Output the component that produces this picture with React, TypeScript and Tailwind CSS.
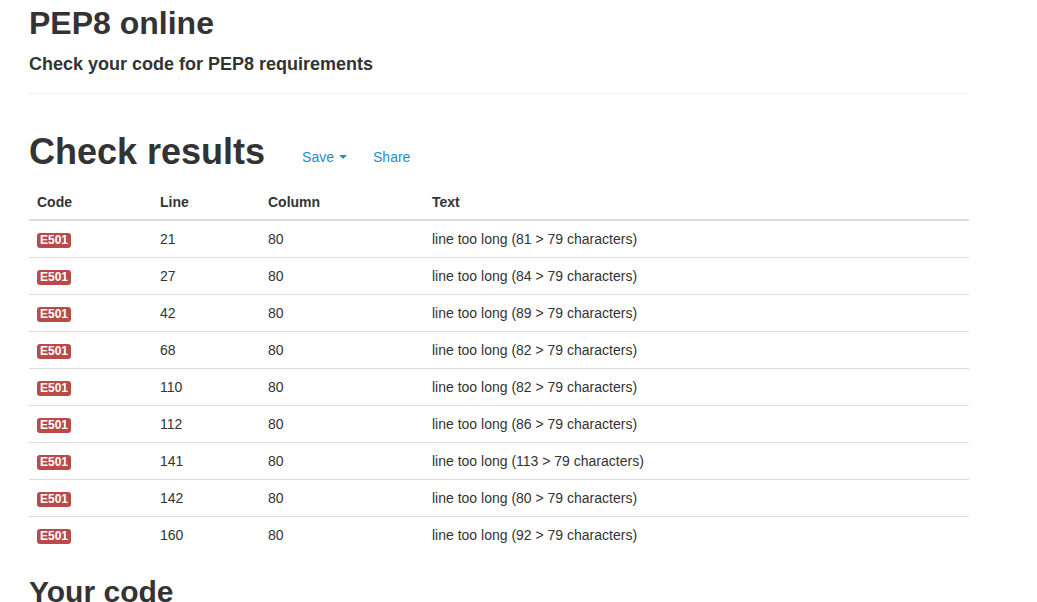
import React from 'react';

const rows = [
  { line: 21, text: 'line too long (81 > 79 characters)' },
  { line: 27, text: 'line too long (84 > 79 characters)' },
  { line: 42, text: 'line too long (89 > 79 characters)' },
  { line: 68, text: 'line too long (82 > 79 characters)' },
  { line: 110, text: 'line too long (82 > 79 characters)' },
  { line: 112, text: 'line too long (86 > 79 characters)' },
  { line: 141, text: 'line too long (113 > 79 characters)' },
  { line: 142, text: 'line too long (80 > 79 characters)' },
  { line: 160, text: 'line too long (92 > 79 characters)' },
];

function App() {
  return (
    <div className="min-h-screen bg-white text-[#333] text-[14px] leading-[20px] font-['Liberation_Sans',Arial,sans-serif] overflow-hidden h-[602px]">
      <div className="ml-[29px] w-[940px]">
        {/* Page header */}
        <div className="pt-[3px] pb-[19px] border-b border-[#eee]">
          <h1 className="text-[32px] leading-[40px] font-bold">PEP8 online</h1>
          <h4 className="mt-[11px] text-[18px] leading-[20px] font-bold">Check your code for PEP8 requirements</h4>
        </div>

        {/* Results heading */}
        <div className="mt-[36px] flex items-center">
          <h1 className="text-[36px] leading-[44px] font-bold">Check results</h1>
          <a className="ml-[37px] mt-[10px] text-[#1f8dd6] text-[14px] flex items-center cursor-pointer">
            Save
            <span className="ml-[5px] inline-block w-0 h-0 border-l-[4px] border-r-[4px] border-t-[4px] border-l-transparent border-r-transparent border-t-[#1f8dd6]"></span>
          </a>
          <a className="ml-[26px] mt-[10px] text-[#1f8dd6] text-[14px] cursor-pointer">Share</a>
        </div>

        <table className="mt-[9px] w-full border-collapse text-left">
          <thead>
            <tr className="border-b-2 border-[#ddd]">
              <th className="w-[123px] px-[8px] pt-[9px] pb-[7px] font-bold">Code</th>
              <th className="w-[108px] px-[8px] pt-[9px] pb-[7px] font-bold">Line</th>
              <th className="w-[164px] px-[8px] pt-[9px] pb-[7px] font-bold">Column</th>
              <th className="px-[8px] pt-[9px] pb-[7px] font-bold">Text</th>
            </tr>
          </thead>
          <tbody>
            {rows.map((r, i) => (
              <tr key={i} className={i > 0 ? 'border-t border-[#ddd]' : ''}>
                <td className="px-[8px] py-[8px] h-[37px]">
                  <span className="inline-block bg-[#b94a48] text-white font-bold text-[12px] leading-[13px] px-[3px] pt-[1px] pb-[1px] rounded-[3px] align-middle">E501</span>
                </td>
                <td className="px-[8px] py-[8px]">{r.line}</td>
                <td className="px-[8px] py-[8px]">80</td>
                <td className="px-[8px] py-[8px]">{r.text}</td>
              </tr>
            ))}
          </tbody>
        </table>

        <h1 className="mt-[20px] text-[30px] leading-[36px] font-bold">Your code</h1>
      </div>
    </div>
  );
}

export default App;
